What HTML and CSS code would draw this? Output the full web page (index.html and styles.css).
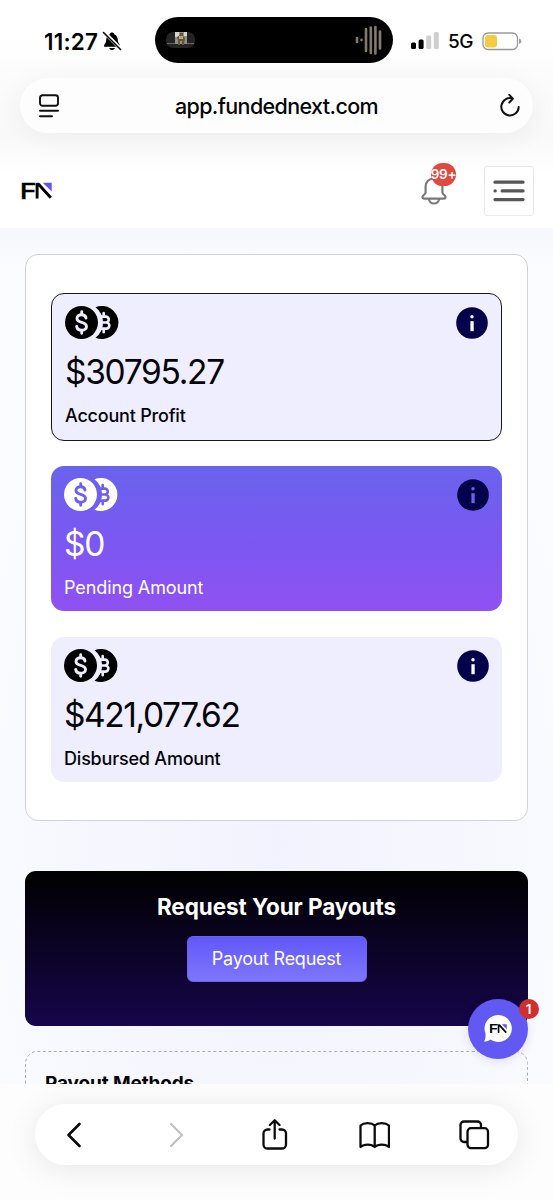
FILE: index.html
```html
<!DOCTYPE html>
<html lang="en">
<head>
<meta charset="utf-8">
<title>FundedNext Payouts</title>
<link rel="stylesheet" href="styles.css">
</head>
<body>
<svg class="defs" width="0" height="0" aria-hidden="true">
  <defs>
    <mask id="coin-cut" maskUnits="userSpaceOnUse" x="0" y="0" width="54" height="34">
      <circle cx="16.5" cy="16.5" r="16.5" fill="#fff"/>
      <path d="M30.500 1.300A16.500 16.500 0 1 1 30.500 31.700A19 19 0 0 0 30.500 1.300Z" fill="#fff"/>
      <path d="M21 12C20.700 9.700 18.900 8.700 16.700 8.700C14 8.700 12 10.200 12 12.500C12 17.800 21.500 14.900 21.500 20.400C21.500 22.800 19.400 24.200 16.700 24.200C14 24.200 12 22.900 11.700 20.500M16.700 5.800V8.700M16.700 24.200V27.200" fill="none" stroke="#000" stroke-width="2.900" stroke-linecap="round"/>
      <path d="M34.500 10.600H40.800A2.950 2.950 0 0 1 40.800 16.500H36M40.800 16.500H41.300A3.050 3.050 0 0 1 41.300 22.600H33.500M38.700 7V10.500M38.700 22.600V26.200" fill="none" stroke="#000" stroke-width="2.600" stroke-linecap="round"/>
    </mask>
    <symbol id="coins" viewBox="0 0 54 34"><rect width="54" height="34" fill="currentColor" mask="url(#coin-cut)"/></symbol>
    <symbol id="info" viewBox="0 0 32 32">
      <circle cx="16" cy="16" r="15.800" fill="#04024a"/>
      <circle cx="16" cy="9.700" r="1.700" fill="currentColor"/>
      <rect x="14.400" y="14.200" width="3.300" height="10" fill="currentColor"/>
    </symbol>
    <symbol id="brand" viewBox="0 0 32 18">
      <text x="-1.200" y="16.500" font-family="Inter, sans-serif" font-size="21.500" font-weight="500" textLength="17" lengthAdjust="spacingAndGlyphs" fill="#000" stroke="#000" stroke-width=".3">F</text>
      <path d="M16.100 16.500V2.300H17.600L29.800 15.700" fill="none" stroke="#000" stroke-width="2.900" stroke-linejoin="round"/>
      <path d="M21.800 .8H30.700V9.600Z" fill="#6156ee"/>
    </symbol>
  </defs>
</svg>

<header class="status">
  <div class="clock">11:27
    <svg width="20" height="20" viewBox="0 0 20 20"><path d="M10 1.500C11.200 1.500 12 2.200 12.200 3.200C15 4.200 15.800 6.700 15.900 10C16 12.200 18 13.100 18 14.900C18 15.500 17.600 15.700 17 15.700H3C2.400 15.700 2 15.500 2 14.900C2 13.100 4 12.200 4.100 10C4.200 6.700 5 4.200 7.800 3.200C8 2.200 8.800 1.500 10 1.500ZM7.200 16.900H12.800C12.400 18.300 11.400 19 10 19C8.600 19 7.600 18.300 7.200 16.900Z"/><path d="M2 1L19 18.200" stroke="#fff" stroke-width="3.600"/><path d="M1.500 1.500L18.500 18.500" stroke="#000" stroke-width="1.600" stroke-linecap="round"/></svg>
  </div>
  <div class="island">
    <svg width="29" height="16" viewBox="0 0 29 16"><rect width="29" height="16" rx="7" fill="#242424"/><path d="M1 11.500H28" stroke="#777" stroke-width=".8"/><rect x="9" width="12" height="12" fill="#8d9189"/><path d="M9 0H13V5H9ZM18 0H21V4H18Z" fill="#d7d6ce"/><path d="M12 13V8L11 5L14 3V1H17V4L19 6L18 13H16V9H14V13Z" fill="#675337"/><path d="M13 4H17V7H13Z" fill="#c3a776"/></svg>
    <svg width="28" height="30" viewBox="0 0 28 30"><path d="M2 13V17M6.500 14.900V15.100M11 4V26M15.800 2.500V28M20.400 2V28.500M25 6.500V23.500" stroke="#837a70" stroke-width="2.600" stroke-linecap="round"/></svg>
  </div>
  <div class="signal">
    <svg width="28" height="18" viewBox="0 0 28 18"><rect y="10.500" width="5" height="6.500" rx="1.500"/><rect x="7.600" y="7.500" width="5" height="9.500" rx="1.500"/><g fill="#cfcfd0"><rect x="15.200" y="3.500" width="5" height="13.500" rx="1.500"/><rect x="22.800" width="5" height="17" rx="1.500"/></g></svg>
    <span>5G</span>
    <svg width="40" height="19" viewBox="0 0 40 19"><rect x="1" y="1" width="34.500" height="16.500" rx="5" fill="#fff" stroke="#9a9a9a" stroke-width="1.300"/><rect x="3" y="3" width="12" height="12.500" rx="3" fill="#f4cb45"/><path d="M37 6.500Q39.300 7 39.300 9.200T37 12Z" fill="#999"/></svg>
  </div>
</header>

<div class="address">
  <svg width="20" height="24" viewBox="0 0 20 24" fill="none" stroke="#111" stroke-width="1.900" stroke-linecap="round"><rect x="1" y="1.200" width="18" height="10.500" rx="2.500"/><path d="M1 16.700H19M1 22.200H13"/></svg>
  <span class="url">app.fundednext.com</span>
  <svg width="20" height="24" viewBox="0 0 20 24" fill="none" stroke="#111" stroke-width="2" stroke-linecap="round" stroke-linejoin="round"><path d="M12.500 4.500A8.700 8.700 0 1 0 18.700 13M9.300 .9L12.900 4.600L9.300 8.500"/></svg>
</div>

<nav class="nav">
  <svg class="logo" width="32" height="18" role="img" aria-label="FN"><use href="#brand"/></svg>
  <div class="bell">
    <svg width="26" height="30" viewBox="0 0 26 30" fill="none" stroke="#78797a" stroke-width="2.200" stroke-linejoin="round"><path d="M13 2.500C8 2.500 4.600 6 4.600 10.500V16.500C4.600 18.500 1.500 19 1.500 21C1.500 22.200 2.300 22.700 3.300 22.700H22.700C23.700 22.700 24.500 22.200 24.500 21C24.500 19 21.400 18.500 21.400 16.500V10.500C21.400 6 18 2.500 13 2.500ZM8 23C8 29 18 29 18 23"/></svg>
    <span class="count">99+</span>
  </div>
  <div class="menu">
    <svg width="32" height="22" viewBox="0 0 32 22" stroke="#555657" stroke-width="3.300" stroke-linecap="round"><path d="M2 2.200H30M2.100 10.900H2.200M9.200 10.900H30M2 19.600H30"/></svg>
  </div>
</nav>

<main class="page">
  <section class="card">
    <article class="stat outlined">
      <div class="icons"><svg width="54" height="34"><use href="#coins"/></svg><svg width="32" height="32"><use href="#info"/></svg></div>
      <div class="amount a1">$30795.27</div>
      <div class="label l1">Account Profit</div>
    </article>
    <article class="stat purple">
      <div class="icons"><svg width="54" height="34"><use href="#coins"/></svg><svg class="tinted" width="32" height="32"><use href="#info"/></svg></div>
      <div class="amount a2">$0</div>
      <div class="label l2">Pending Amount</div>
    </article>
    <article class="stat">
      <div class="icons"><svg width="54" height="34"><use href="#coins"/></svg><svg width="32" height="32"><use href="#info"/></svg></div>
      <div class="amount a3">$421,077.62</div>
      <div class="label l3">Disbursed Amount</div>
    </article>
  </section>
  <section class="request">
    <h2>Request Your Payouts</h2>
    <button type="button">Payout Request</button>
  </section>
  <section class="methods">
    <svg class="dashes" width="503" height="60" viewBox="0 0 503 60" fill="none"><path d="M.5 60V12.500A12 12 0 0 1 12.500 .5H490.500A12 12 0 0 1 502.500 12.500V60" stroke="#a3b0cc" stroke-dasharray="3 2.500"/></svg>
    <h3>Payout Methods</h3>
  </section>
</main>

<div class="chat">
  <svg width="30" height="28" viewBox="0 0 30 28"><path d="M15.500 0A13.500 13.500 0 1 1 7.500 24.500Q4.500 27 1 26.500Q3 24.500 2.500 18.500A13.500 13.500 0 0 1 15.500 0Z" fill="#fff"/><use href="#brand" x="6.500" y="8.800" width="18" height="10.100"/></svg>
  <span class="unread">1</span>
</div>

<footer class="dock">
  <div class="tools">
    <svg width="32" height="32" viewBox="0 0 32 32" stroke-width="2.600"><path d="M22.500 5L11.500 16L22.500 27"/></svg>
    <svg class="off" width="32" height="32" viewBox="0 0 32 32"><path d="M14 5L25 16L14 27"/></svg>
    <svg width="32" height="32" viewBox="0 0 32 32"><path d="M11.500 10.500H9.500A4 4 0 0 0 5.500 14.500V25.500A4 4 0 0 0 9.500 29.500H24A4 4 0 0 0 28 25.500V14.500A4 4 0 0 0 24 10.500H21.500M16.700 19.500V1.500M11.900 6L16.700 1.300L21.500 6"/></svg>
    <svg width="32" height="32" viewBox="0 0 32 32"><path d="M16.700 6.500C13.500 3.500 6 3.300 2.500 6.500V28C6 24.800 13.500 24.800 16.700 28C20 24.800 27.500 24.800 31 28V6.500C27.500 3.300 20 3.500 16.700 6.500V28"/></svg>
    <svg width="32" height="32" viewBox="0 0 32 32"><path d="M9 23H6A3.500 3.500 0 0 1 2.500 19.500V6A3.500 3.500 0 0 1 6 2.500H19.500A3.500 3.500 0 0 1 23 6V8.500"/><rect x="9.500" y="9.200" width="20.500" height="20" rx="3.500"/></svg>
  </div>
</footer>
</body>
</html>
```
FILE: styles.css
```css
* { box-sizing: border-box; }
body {
  margin: 0; width: 553px; height: 1200px; overflow: hidden; position: relative;
  display: flex; flex-direction: column;
  font-family: Inter, "Liberation Sans", sans-serif; color: #050508;
  background: linear-gradient(#fff 35px, #fbfbfb 85px, #f9f9f9 135px, #fff 180px);
}
svg { display: block; flex: none; }
.defs { position: absolute; }

.status {
  height: 78px; padding: 4px 32px 0 44px; flex: none;
  display: grid; grid-template-columns: 111px 238px 1fr; align-items: center;
}
.clock { display: flex; align-items: center; gap: 4px; font-size: 22.500px; font-weight: 600; letter-spacing: .2px; }
.island {
  height: 46px; border-radius: 23px; background: #000; padding: 0 10px 0 11px; margin-top: -2px;
  display: flex; align-items: center; justify-content: space-between;
}
.signal { display: flex; align-items: center; padding-left: 18px; font-size: 19px; font-weight: 500; letter-spacing: -.4px; }
.signal span { margin: 0 9px; }

.address {
  height: 55px; margin: 0 20px; padding: 0 13px 0 19px; flex: none; border-radius: 28px;
  display: flex; align-items: center; justify-content: space-between;
  background: #fdfdfd; box-shadow: 0 4px 28px rgba(0,0,0,.055);
}
.url { font-size: 21.500px; font-weight: 500; letter-spacing: -.62px; margin-right: 6px; }

.nav {
  height: 95px; flex: none; padding: 20px 19px 0 21px;
  display: flex; align-items: center;
}
.bell { position: relative; margin-left: auto; margin-right: 37px; }
.count {
  position: absolute; left: 10px; top: -13px; width: 25px; height: 23px; border-radius: 12px;
  background: #df493f; color: #fff; font-size: 13.500px; font-weight: 600; line-height: 23px;
  display: flex; justify-content: center; letter-spacing: -.3px;
}
.menu { width: 50px; height: 50px; border: 1px solid #e9e9eb; border-radius: 3px; background: #fff; display: grid; place-items: center; }

.page {
  height: 856px; flex: none; overflow: hidden; padding: 26px 25px 0;
  background:
    linear-gradient(rgba(0,0,0,.02), transparent 40px),
    radial-gradient(ellipse 330px 620px at 50% 72%, #f1f2fd, #f7f8fe 65%, #fbfcff);
}
.card {
  height: 567px; padding: 38px 25px 0; border: 1px solid #cfd2dc; border-radius: 13px; background: #fff;
  display: flex; flex-direction: column; gap: 25.500px;
}
.stat { height: 145px; padding: 12px 13px; border-radius: 13px; background: #efeeff; }
.outlined { height: 147.500px; border: 1.500px solid #18171f; padding: 12px 13px; }
.purple { background: linear-gradient(#6963ec, #7c57f2 55%, #9051f1); color: #fff; }
.icons { display: flex; align-items: center; justify-content: space-between; height: 34px; color: #000; }
.purple .icons { color: #fff; }
.icons svg:last-child { color: #fff; }
.purple .icons .tinted { color: #6b60ec; }
.amount { height: 40px; margin-top: 12px; line-height: 40px; font-size: 33.500px; white-space: nowrap; }
.a1 { letter-spacing: -1.300px; }
.a2 { letter-spacing: -1.200px; }
.a3 { letter-spacing: -1.400px; }
.label { height: 22px; margin-top: 13px; line-height: 22px; font-size: 18px; font-weight: 500; letter-spacing: -.2px; }
.purple .label { font-weight: 400; letter-spacing: -.1px; }

.request {
  height: 155px; margin-top: 50px; border-radius: 11px; padding-top: 21px;
  display: flex; flex-direction: column; align-items: center;
  background: linear-gradient(#000, #16064a);
}
.request h2 { margin: 0; height: 30px; line-height: 30px; font-size: 22.500px; font-weight: 700; letter-spacing: -.07px; color: #fff; white-space: nowrap; }
.request button {
  margin-top: 14px; width: 180px; height: 46px; padding: 0 0 2px; border: 1px solid #6b63ee; border-radius: 6px;
  background: linear-gradient(#6258fa, #7d76fb); color: #fff; font: 18px Inter, sans-serif; letter-spacing: -.25px; white-space: nowrap;
}
.methods { position: relative; height: 150px; margin-top: 25px; padding: 21px 20px; }
.dashes { position: absolute; left: 0; top: 0; }
.methods h3 { margin: 0; font-size: 19px; line-height: 24px; font-weight: 700; letter-spacing: -.13px; }

.chat {
  position: absolute; left: 467.500px; top: 999px; width: 60px; height: 60px; border-radius: 50%;
  background: #6258f2; display: grid; place-items: center; box-shadow: 0 2px 10px rgba(30,20,80,.12);
}
.unread {
  position: absolute; right: -11px; top: 0; width: 20px; height: 20px; border-radius: 50%;
  background: #cf302f; color: #fff; font-size: 13.500px; font-weight: 600; line-height: 20px; text-align: center;
}

.dock { height: 116px; flex: none; padding: 20px 35px 0; background: #fdfdfd; overflow: hidden; }
.tools {
  height: 61px; padding: 0 28px 0 22px; border-radius: 31px; background: #fff;
  display: flex; align-items: center; justify-content: space-between;
  box-shadow: 0 4px 32px rgba(0,0,0,.09);
  fill: none; stroke: #0b0b0b; stroke-width: 2.300; stroke-linecap: round; stroke-linejoin: round;
}
.off { stroke: #c2c2c2; }
```
